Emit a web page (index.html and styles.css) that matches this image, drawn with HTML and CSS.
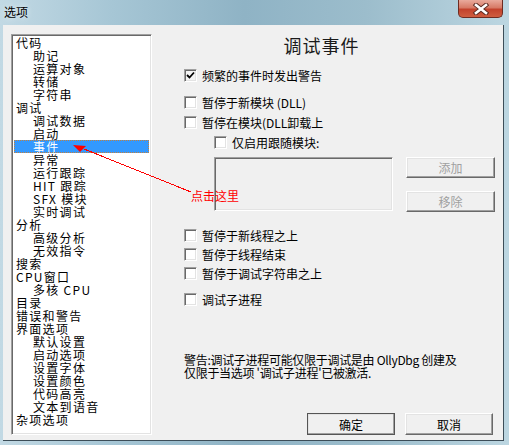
FILE: index.html
```html
<!DOCTYPE html>
<html lang="zh">
<head>
  <meta charset="UTF-8">
  <title>选项</title>
  <link rel="stylesheet" href="styles.css">
</head>
<body>
  <div class="window">
    <div class="titlebar">
      <span class="title-text">选项</span>
      <div class="close-btn">
        <svg width="18" height="12" viewBox="0 0 18 12">
          <path d="M4 2 L14 10 M14 2 L4 10" stroke="#5a2a22" stroke-width="4.5" stroke-linecap="square"/>
          <path d="M4 2 L14 10 M14 2 L4 10" stroke="#fff" stroke-width="2.6" stroke-linecap="square"/>
        </svg>
      </div>
    </div>
    <div class="client">
      <div class="tree">
        <div class="node">代码</div>
        <div class="node child">助记</div>
        <div class="node child">运算对象</div>
        <div class="node child">转储</div>
        <div class="node child">字符串</div>
        <div class="node">调试</div>
        <div class="node child">调试数据</div>
        <div class="node child">启动</div>
        <div class="node child selected">事件</div>
        <div class="node child">异常</div>
        <div class="node child">运行跟踪</div>
        <div class="node child">HIT 跟踪</div>
        <div class="node child">SFX 模块</div>
        <div class="node child">实时调试</div>
        <div class="node">分析</div>
        <div class="node child">高级分析</div>
        <div class="node child">无效指令</div>
        <div class="node">搜索</div>
        <div class="node">CPU窗口</div>
        <div class="node child">多核 CPU</div>
        <div class="node">目录</div>
        <div class="node">错误和警告</div>
        <div class="node">界面选项</div>
        <div class="node child">默认设置</div>
        <div class="node child">启动选项</div>
        <div class="node child">设置字体</div>
        <div class="node child">设置颜色</div>
        <div class="node child">代码高亮</div>
        <div class="node child">文本到语音</div>
        <div class="node">杂项选项</div>
      </div>

      <div class="panel">
        <div class="panel-title">调试事件</div>

        <label class="check-row row-1"><span class="box checked"><svg width="9" height="9" viewBox="0 0 9 9"><path d="M1 4 L3.5 6.5 L8 1.5" stroke="#000" stroke-width="1.8" fill="none"/></svg></span>频繁的事件时发出警告</label>
        <label class="check-row row-2"><span class="box"></span>暂停于新模块 (DLL)</label>
        <label class="check-row row-3"><span class="box"></span>暂停在模块(DLL卸载上</label>
        <label class="check-row row-3 indent"><span class="box"></span>仅启用跟随模块:</label>

        <div class="module-area">
          <div class="module-list"></div>
          <div class="module-buttons">
            <button class="btn disabled">添加</button>
            <button class="btn disabled">移除</button>
          </div>
        </div>

        <label class="check-row row-5"><span class="box"></span>暂停于新线程之上</label>
        <label class="check-row row-6"><span class="box"></span>暂停于线程结束</label>
        <label class="check-row row-6"><span class="box"></span>暂停于调试字符串之上</label>
        <label class="check-row row-8"><span class="box"></span>调试子进程</label>

        <p class="warning">警告:调试子进程可能仅限于调试是由 OllyDbg 创建及<br>仅限于当选项 '调试子进程'已被激活.</p>

        <div class="dialog-buttons">
          <button class="btn default">确定</button>
          <button class="btn">取消</button>
        </div>
      </div>
    </div>

    <!-- annotation drawn over the dialog -->
    <svg class="annotation" width="509" height="445" viewBox="0 0 509 445">
      <path d="M84 149 L191 192" stroke="#ff0000" stroke-width="1" fill="none" shape-rendering="crispEdges"/>
      <polygon points="73,145 86,146 80,152" fill="#ff0000"/>
    </svg>
    <span class="note">点击这里</span>
  </div>
</body>
</html>
```

FILE: styles.css
```css
body {
  margin: 0;
  background: #fff;
  font-family: "Liberation Sans", "Noto Sans CJK SC", sans-serif;
  font-size: 12px;
  color: #000;
}
.window {
  position: relative;
  width: 509px;
  height: 445px;
  background: linear-gradient(90deg, #c2d9e4 0%, #a6c6d5 22%, #8fb3c5 48%, #9cbdcc 72%, #bcd6e1 100%);
  overflow: hidden;
}
.titlebar {
  height: 25px;
  display: flex;
  justify-content: space-between;
  align-items: flex-start;
}
.title-text {
  padding: 4px 0 0 4px;
  font-family: "Noto Sans CJK SC", sans-serif;
  font-size: 12px;
  line-height: 16px;
  color: #000;
  text-shadow: 0 0 6px rgba(255,255,255,0.8);
}
.close-btn {
  width: 43px;
  height: 17px;
  margin-right: 6px;
  border: 1px solid #6e2c22;
  border-top: none;
  border-radius: 0 0 5px 5px;
  background: linear-gradient(180deg, #e9aa9c 0%, #d77a66 45%, #c3422c 55%, #cf5d40 100%);
  display: flex;
  justify-content: center;
  align-items: center;
}
.client {
  margin-left: 3px;
  background: #f0f0f0;
  border-right: 1px solid #3c4d58;
  border-bottom: 1px solid #3c4d58;
  display: flex;
  padding: 9px 0 0 8px;
  width: 492px;
  height: 406px;
}

/* tree view */
.tree {
  width: 141px;
  height: 401px;
  box-sizing: border-box;
  border-top: 1px solid #a0a0a0;
  border-left: 1px solid #a0a0a0;
  border-right: 1px solid #fff;
  border-bottom: 1px solid #fff;
  box-shadow: inset 1px 1px 0 #696969, inset -1px -1px 0 #e3e3e3;
  background: #fff;
  padding: 1px 2px 0 2px;
  font-family: "Noto Sans CJK SC", sans-serif;
  font-size: 12px;
  line-height: 13px;
  letter-spacing: 1.3px;
}
.node {
  height: 13px;
  padding-left: 2px;
  white-space: nowrap;
}
.node.child {
  padding-left: 19px;
}
.node.selected {
  background: #3399ff;
  color: #fff;
  outline: 1px dotted #c08040;
  outline-offset: -1px;
}

/* right panel */
.panel {
  flex: 1;
  padding-left: 32px;
  font-family: "Noto Sans CJK SC", sans-serif;
}
.panel-title {
  margin-top: 1px;
  height: 20px;
  line-height: 20px;
  font-size: 18px;
  letter-spacing: 1px;
  color: #1a1a1a;
  text-align: center;
  padding-right: 44px;
}
.check-row {
  display: flex;
  align-items: center;
  height: 13px;
  line-height: 13px;
  font-size: 12px;
  white-space: nowrap;
}
.check-row.row-1 { margin-top: 14px; }
.check-row.row-2 { margin-top: 14px; }
.check-row.row-3 { margin-top: 7px; }
.check-row.row-5 { margin-top: 17px; }
.check-row.row-6 { margin-top: 6px; }
.check-row.row-8 { margin-top: 13px; }
.check-row.indent { padding-left: 30px; }
.box {
  width: 13px;
  height: 13px;
  box-sizing: border-box;
  margin-right: 5px;
  border-top: 1px solid #a0a0a0;
  border-left: 1px solid #a0a0a0;
  border-right: 1px solid #fff;
  border-bottom: 1px solid #fff;
  box-shadow: inset 1px 1px 0 #696969, inset -1px -1px 0 #e3e3e3;
  background: #fff;
  display: flex;
  justify-content: center;
  align-items: center;
  flex-shrink: 0;
}
.box.checked {
  background: #f4f4f4;
}

.module-area {
  display: flex;
  margin-top: 8px;
  padding-left: 30px;
}
.module-list {
  width: 179px;
  height: 54px;
  box-sizing: border-box;
  border-top: 1px solid #a0a0a0;
  border-left: 1px solid #a0a0a0;
  border-right: 1px solid #fff;
  border-bottom: 1px solid #fff;
  box-shadow: inset 1px 1px 0 #696969, inset -1px -1px 0 #e3e3e3;
  background: #f0f0f0;
}
.module-buttons {
  display: flex;
  flex-direction: column;
  gap: 13px;
  margin-left: 13px;
}

.btn {
  width: 89px;
  height: 21px;
  padding: 0;
  box-sizing: border-box;
  background: #f0f0f0;
  border: 1px solid;
  border-color: #fff #696969 #696969 #fff;
  box-shadow: inset -1px -1px 0 #a0a0a0, inset 1px 1px 0 #e3e3e3;
  font-family: "Noto Sans CJK SC", sans-serif;
  font-size: 12px;
  line-height: 17px;
  color: #000;
}
.btn.disabled {
  color: #a0a0a0;
}

.warning {
  margin: 47px 0 0 0;
  font-size: 12px;
  line-height: 13px;
  white-space: nowrap;
  letter-spacing: -0.3px;
}

.dialog-buttons {
  display: flex;
  justify-content: flex-end;
  gap: 10px;
  margin-top: 34px;
  padding-right: 10px;
}
.dialog-buttons .btn {
  width: 88px;
  height: 22px;
}
.btn.default {
  outline: 1px solid #555;
  outline-offset: -1px;
}

/* red annotation */
.annotation {
  position: absolute;
  left: 0;
  top: 0;
  pointer-events: none;
}
.note {
  position: absolute;
  left: 191px;
  top: 189px;
  font-family: "Noto Sans CJK SC", sans-serif;
  font-size: 12px;
  line-height: 14px;
  color: #ff0000;
}
```
